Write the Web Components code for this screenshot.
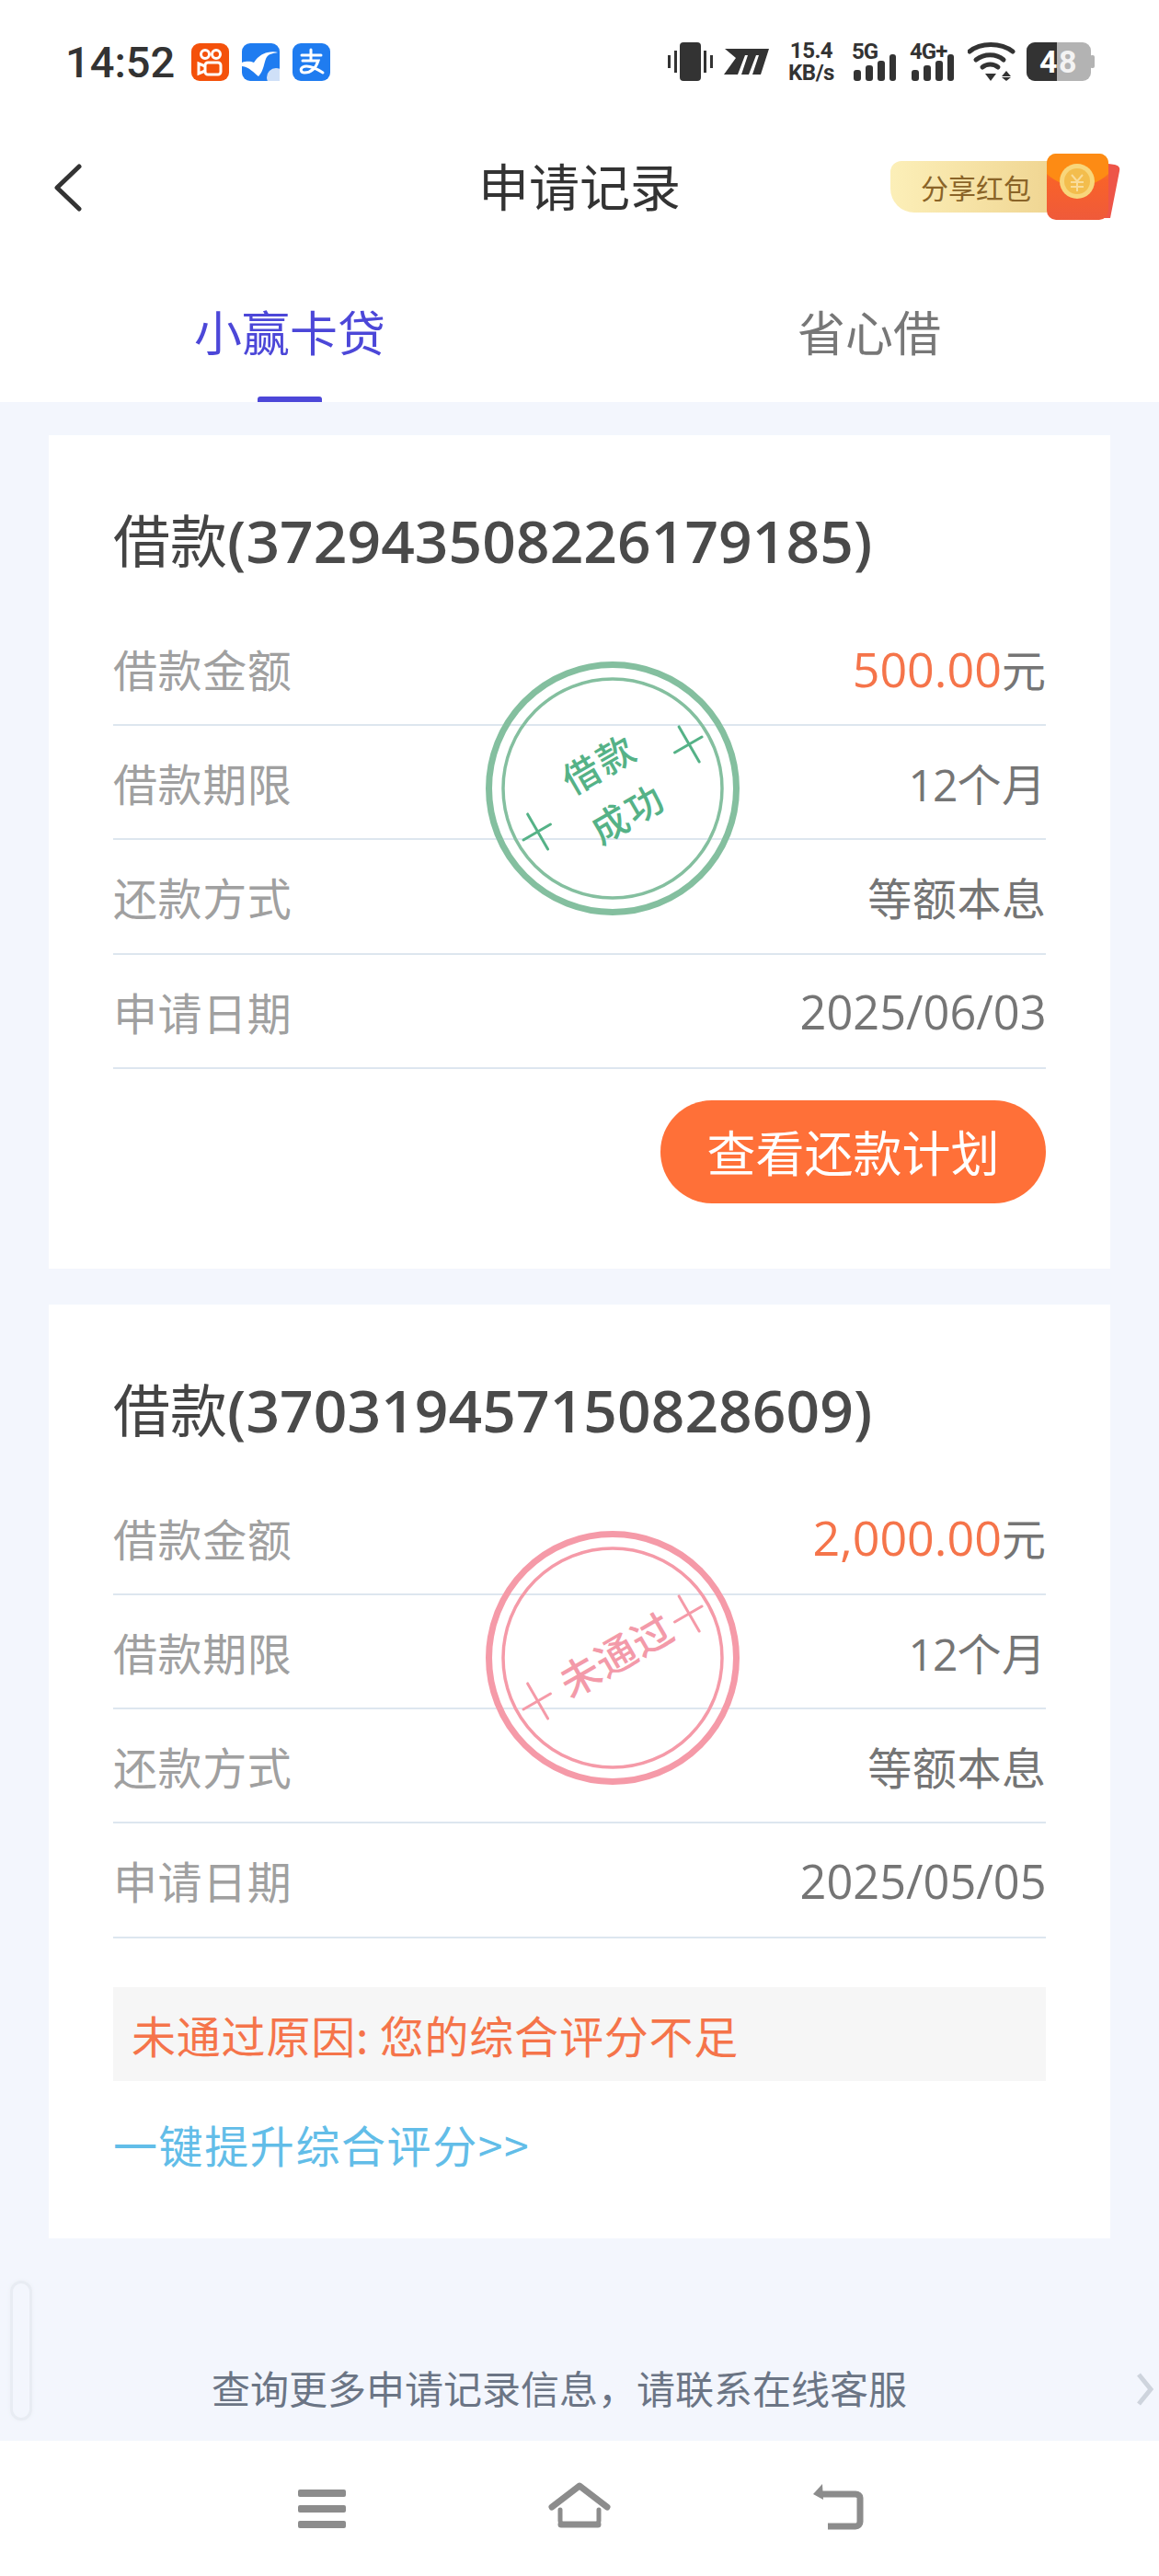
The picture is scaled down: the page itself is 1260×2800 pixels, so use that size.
<!DOCTYPE html>
<html lang="zh">
<head>
<meta charset="utf-8">
<title>申请记录</title>
<style>
  html, body { margin: 0; padding: 0; }
  body {
    width: 1260px;
    height: 2800px;
    overflow: hidden;
    background: #f3f6fd;
    font-family: "Noto Sans CJK SC", "Noto Sans", sans-serif;
    display: flex;
    flex-direction: column;
  }
</style>
</head>
<body>
  <status-bar></status-bar>
  <app-header></app-header>
  <tab-bar></tab-bar>
  <record-list>
    <loan-card loan-id="372943508226179185" amount="500.00" date="2025/06/03" stamp="ok">
      <pill-button>查看还款计划</pill-button>
    </loan-card>
    <loan-card loan-id="370319457150828609" amount="2,000.00" date="2025/05/05" stamp="fail">
      <fail-reason>未通过原因: 您的综合评分不足</fail-reason>
    </loan-card>
  </record-list>
  <help-foot>查询更多申请记录信息，请联系在线客服</help-foot>
  <nav-bar></nav-bar>

<script>
class StatusBar extends HTMLElement {
  constructor() {
    super();
    this.attachShadow({ mode: "open" });
  }
  connectedCallback() {
    this.shadowRoot.innerHTML = `
    <style>
      :host { display: flex; align-items: center; height: 130px; padding: 4px 70px 0 71px; box-sizing: border-box; background: #fff; color: #333; font-family: "Roboto", "Noto Sans", sans-serif; }
      .time { font-size: 47px; font-weight: 500; width: 137px; line-height: 1; }
      .apps { display: flex; gap: 14px; }
      .apps svg { display: block; }
      .right { margin-left: auto; display: flex; align-items: center; height: 44px; }
      svg { display: block; flex: none; }
      .speed { width: 50px; margin: 0 19px 0 21px; font-size: 24px; font-weight: 700; line-height: 24px; text-align: center; white-space: nowrap; letter-spacing: -.5px; }
      .net { position: relative; width: 50px; height: 42px; margin-right: 13px; }
      .net b { position: absolute; left: 0; top: 0; font-size: 24px; line-height: 20px; font-weight: 700; white-space: nowrap; letter-spacing: -1px; }
      .net svg { position: absolute; left: 2px; top: 13px; }
      .batt { position: relative; width: 74px; height: 42px; margin-left: 12px; }
      .batt span { position: absolute; top: 0; font-size: 34px; line-height: 42px; font-weight: 700; color: #fff; }
    </style>
    <span class="time">14:52</span>
    <div class="apps">
      <svg width="41" height="41" viewBox="0 0 41 41"><rect width="41" height="41" rx="9" fill="#f4510b"/><g fill="none" stroke="#fff" stroke-width="3"><circle cx="15" cy="12" r="4.5"/><circle cx="27" cy="12" r="4.5"/><rect x="15" y="21" width="17" height="13" rx="3"/><path d="M15 25l-7-3v11l7-3"/></g></svg>
      <svg width="41" height="41" viewBox="0 0 41 41"><rect width="41" height="41" rx="9" fill="#1f7cf0"/><path d="M0 21c6-2 10-1 13 0 3-5 9-10 15-11 4-1 8-1 11 0-6 1-10 2-12 5-3 5-3 15-9 21C13 32 8 26 0 25z" fill="#fff"/><circle cx="37" cy="37" r="10" fill="#cfe0f8"/></svg>
      <svg width="41" height="41" viewBox="0 0 41 41"><rect width="41" height="41" rx="9" fill="#1f7cf0"/><g fill="none" stroke="#fff" stroke-width="3" stroke-linecap="round"><path d="M10 13h21M20 7v11M11 19h17c-3 9-9 13-15 13-4 0-5-4-2-6 6-3 14 1 22 6"/></g></svg>
    </div>
    <div class="right">
      <svg width="49" height="42" viewBox="0 0 49 42" fill="#333"><rect x="13" width="23" height="42" rx="4"/><rect y="14" width="3" height="14"/><rect x="7" y="9" width="3" height="24"/><rect x="39" y="9" width="3" height="24"/><rect x="46" y="14" width="3" height="14"/></svg>
      <svg width="49" height="28" viewBox="0 0 49 28" fill="#333" style="margin-left:12px"><path d="M1 0h48l-9 28h-9l7-21h-3l-8 21h-8l7-21h-3l-8 21H0l13-18z"/></svg>
      <div class="speed">15.4<br>KB/s</div>
      <div class="net"><b>5G</b><svg width="46" height="29" viewBox="0 0 46 29" fill="#333"><rect y="17" width="8" height="12" rx="3"/><rect x="13" y="12" width="8" height="17" rx="3"/><rect x="26" y="7" width="8" height="22" rx="3"/><rect x="39" y="0" width="7" height="29" rx="3"/></svg></div>
      <div class="net"><b>4G+</b><svg width="46" height="29" viewBox="0 0 46 29" fill="#333"><rect y="17" width="8" height="12" rx="3"/><rect x="13" y="12" width="8" height="17" rx="3"/><rect x="26" y="7" width="8" height="22" rx="3"/><rect x="39" y="0" width="7" height="29" rx="3"/></svg></div>
      <svg width="52" height="42" viewBox="0 0 52 42"><g fill="none" stroke="#333" stroke-width="5" stroke-linecap="round"><path d="M2 10C14 0 36 0 49 10"/><path d="M9 19c9-7 22-7 30 0"/><path d="M16 27c5-4 12-4 17 0"/></g><path d="M19 34h12l-6 8zM42 31l5 6H37zM37 38h10l-5 4z" fill="#333"/></svg>
      <div class="batt">
        <svg width="74" height="42" viewBox="0 0 74 42"><rect x="69" y="14" width="5" height="14" rx="2" fill="#b3b3b3"/><rect width="70" height="42" rx="9" fill="#b3b3b3"/><path d="M9 0h24v42H9a9 9 0 0 1-9-9V9a9 9 0 0 1 9-9z" fill="#333"/></svg>
        <span style="left:14px">4</span><span style="left:35px;opacity:.85">8</span>
      </div>
    </div>`;
  }
}

class AppHeader extends HTMLElement {
  constructor() {
    super();
    this.attachShadow({ mode: "open" });
  }
  connectedCallback() {
    this.shadowRoot.innerHTML = `
    <style>
      :host { display: flex; align-items: center; position: relative; height: 148px; background: #fff; padding: 0 42px 0 57px; box-sizing: border-box; }
      h1 { position: absolute; left: 0; right: 0; top: 35px; margin: 0; text-align: center; font-size: 55px; line-height: 70px; font-weight: 400; color: #333; }
      svg { display: block; }
      .share { margin-left: auto; display: flex; align-items: center; position: relative; }
      .pill { width: 172px; height: 56px; box-sizing: border-box; padding: 0 0 0 33px; border-radius: 12px 0 0 26px; background: linear-gradient(90deg, #fcefb8, #f0d693); color: #8a6428; font-size: 30px; line-height: 56px; white-space: nowrap; }
      .bag { margin-left: -2px; }
    </style>
    <svg width="33" height="52" viewBox="0 0 33 52"><path d="M29 3L5 26l24 23" fill="none" stroke="#333" stroke-width="5" stroke-linecap="round" stroke-linejoin="round"/></svg>
    <h1>申请记录</h1>
    <div class="share" style="margin-top:-2px">
      <div class="pill">分享红包</div>
      <svg class="bag" width="80" height="72" viewBox="0 0 80 72">
        <defs><linearGradient id="env" x1="0" y1="0" x2="0" y2="1"><stop offset="0" stop-color="#ffa30f"/><stop offset=".4" stop-color="#f8622a"/><stop offset="1" stop-color="#ef5a3a"/></linearGradient></defs>
        <path d="M60 10l14 2c4 1 6 3 5 7L69 70H50z" fill="#ee5548"/>
        <rect width="67" height="72" rx="10" fill="url(#env)"/>
        <path d="M0 22c20 18 47 18 67 0V10A10 10 0 0 0 57 0H10A10 10 0 0 0 0 10z" fill="#fd8b14"/>
        <circle cx="33" cy="30" r="19" fill="#f8d67b"/>
        <circle cx="33" cy="30" r="14" fill="#f3bd4d"/>
        <path d="M27 23l6 7 6-7M26 31h14M26 36h14M33 30v11" fill="none" stroke="#f9dc9b" stroke-width="2"/>
      </svg>
    </div>`;
  }
}

class TabBar extends HTMLElement {
  constructor() {
    super();
    this.attachShadow({ mode: "open" });
  }
  connectedCallback() {
    this.shadowRoot.innerHTML = `
    <style>
      :host { display: grid; grid-template-columns: 1fr 1fr; height: 159px; background: #fff; }
      div { position: relative; text-align: center; font-size: 52px; line-height: 66px; padding-top: 49px; color: #777; }
      .on { color: #4c47d8; }
      .on::after { content: ""; position: absolute; left: 280px; bottom: 0; width: 70px; height: 6px; background: #4c47d8; border-radius: 3px 3px 0 0; }
    </style>
    <div class="on">小赢卡贷</div>
    <div>省心借</div>`;
  }
}

class RecordList extends HTMLElement {
  constructor() {
    super();
    this.attachShadow({ mode: "open" });
  }
  connectedCallback() {
    this.shadowRoot.innerHTML = `
    <style>
      :host { display: flex; flex-direction: column; gap: 39px; padding: 36px 53px 0; flex: 1; min-height: 0; }
    </style>
    <slot></slot>`;
  }
}

class LoanStamp extends HTMLElement {
  constructor() {
    super();
    this.attachShadow({ mode: "open" });
  }
  connectedCallback() {
    const ok = this.getAttribute("kind") === "ok";
    const ring = ok ? "#84bf9f" : "#f59aa8";
    const ink = ok ? "#55b287" : "#f39aa9";
    const words = ok
      ? `<text x="1" y="-15" font-size="40" letter-spacing="3" text-anchor="middle">借款</text><text x="1" y="47" font-size="40" letter-spacing="3" text-anchor="middle">成功</text>`
      : `<text x="5" y="16" font-size="44" letter-spacing="1" text-anchor="middle">未通过</text>`;
    this.shadowRoot.innerHTML = `
    <style>
      :host { display: block; position: absolute; left: 473px; top: 244px; width: 280px; height: 280px; }
      svg { display: block; }
      text { font-family: "Noto Sans CJK SC", sans-serif; font-weight: 500; }
    </style>
    <svg width="280" height="280" viewBox="-140 -140 280 280">
      <circle r="134.5" fill="none" stroke="${ring}" stroke-width="7"/>
      <circle r="119" fill="none" stroke="${ring}" stroke-width="3.5"/>
      <g transform="rotate(-30)" fill="${ink}">${words}
        <g stroke="${ok ? ink : ring}" stroke-width="3" stroke-linecap="round" fill="none">
          <path d="M78 0h34M96 -22v44"/>
          <path d="M-112 0h34M-94 -22v44"/>
        </g>
      </g>
    </svg>`;
  }
}

class LoanCard extends HTMLElement {
  constructor() {
    super();
    this.attachShadow({ mode: "open" });
  }
  connectedCallback() {
    const id = this.getAttribute("loan-id");
    const rows = [
      ["借款金额", `<em class="num">${this.getAttribute("amount")}</em>元`],
      ["借款期限", `<i class="num short">12</i>个月`],
      ["还款方式", "等额本息"],
      ["申请日期", `<i class="num">${this.getAttribute("date")}</i>`],
    ];
    this.shadowRoot.innerHTML = `
    <style>
      :host { display: block; position: relative; background: #fff; padding: 73px 70px 71px; }
      h2 { margin: 0 0 38px; font-size: 62px; line-height: 78px; font-weight: 400; color: #444; white-space: nowrap; }
      h2 span { font-family: "Open Sans", sans-serif; font-size: 64px; font-weight: 600; color: #4a4a4a; letter-spacing: .1px; }
      .row { display: flex; justify-content: space-between; align-items: center; height: 124.2px; border-bottom: 2px solid #dde6ef; box-sizing: border-box; font-size: 48px; color: #757575; }
      .row label { color: #a0a0a0; letter-spacing: .6px; }
      .row span { letter-spacing: .6px; margin-right: -.6px; white-space: nowrap; }
      .num { font-family: "Open Sans", sans-serif; font-size: 50.5px; font-style: normal; letter-spacing: 0; }
      .short { font-size: 48px; letter-spacing: -1px; }
      em.num { color: #f5744a; font-size: 52px; }
    </style>
    <h2>借款<span>(${id})</span></h2>
    ${rows.map(r => `<div class="row"><label>${r[0]}</label><span>${r[1]}</span></div>`).join("")}
    <slot></slot>
    <loan-stamp kind="${this.getAttribute("stamp")}"></loan-stamp>`;
  }
}

class PillButton extends HTMLElement {
  constructor() {
    super();
    this.attachShadow({ mode: "open" });
  }
  connectedCallback() {
    this.shadowRoot.innerHTML = `
    <style>
      :host { display: flex; justify-content: flex-end; margin-top: 34px; }
      button { width: 419px; height: 112px; border: 0; border-radius: 56px; background: #ff7038; color: #fff; font: 400 53px/1 "Noto Sans CJK SC", sans-serif; padding: 0; }
    </style>
    <button><slot></slot></button>`;
  }
}

class FailReason extends HTMLElement {
  constructor() {
    super();
    this.attachShadow({ mode: "open" });
  }
  connectedCallback() {
    this.shadowRoot.innerHTML = `
    <style>
      :host { display: block; margin-top: 53px; }
      .box { height: 102px; background: #f6f6f6; padding-left: 20px; color: #f5744a; font-size: 48px; line-height: 102px; white-space: nowrap; letter-spacing: .8px; }
      a { display: block; margin: 38px 0 2px; color: #62bde8; font-size: 48px; line-height: 60px; white-space: nowrap; letter-spacing: 1.6px; }
    </style>
    <div class="box"><slot></slot></div>
    <a>一键提升综合评分&gt;&gt;</a>`;
  }
}

class HelpFoot extends HTMLElement {
  constructor() {
    super();
    this.attachShadow({ mode: "open" });
  }
  connectedCallback() {
    this.shadowRoot.innerHTML = `
    <style>
      :host { display: block; position: relative; height: 100px; text-align: center; color: #6b7585; font-size: 42px; line-height: 60px; padding: 12px 44px 0 0; box-sizing: border-box; }
      .handle { position: absolute; left: 11px; bottom: 22px; width: 24px; height: 152px; box-sizing: border-box; border: 3px solid #e8ecf3; border-radius: 12px; box-shadow: 0 0 4px #eceff5; }
      svg { position: absolute; right: 5px; top: 26px; }
    </style>
    <div class="handle"></div>
    <slot></slot>
    <svg width="20" height="36" viewBox="0 0 20 36"><path d="M3 2l13 16L3 34" fill="none" stroke="#ced4dd" stroke-width="5"/></svg>`;
  }
}

class NavBar extends HTMLElement {
  constructor() {
    super();
    this.attachShadow({ mode: "open" });
  }
  connectedCallback() {
    this.shadowRoot.innerHTML = `
    <style>
      :host { display: flex; align-items: flex-start; height: 147px; background: #fff; padding: 45px 0 0 324px; box-sizing: border-box; }
      svg { display: block; flex: none; }
    </style>
    <svg width="52" height="50" viewBox="0 0 52 50" style="margin-top:8px" fill="#8c8c8c"><rect width="52" height="8" rx="2"/><rect y="17" width="52" height="8" rx="2"/><rect y="34" width="52" height="8" rx="2"/></svg>
    <svg width="68" height="50" viewBox="0 0 68 50" style="margin-left:220px" fill="none" stroke="#8c8c8c" stroke-width="7" stroke-linejoin="round" stroke-linecap="round"><path d="M4 27L34 4l30 23"/><path d="M13 30v12c0 3 2 4 4 4h34c2 0 4-1 4-4V30" stroke-width="5"/><path d="M14 46h40" stroke-width="7"/></svg>
    <svg width="58" height="52" viewBox="0 0 58 52" style="margin-left:218px" fill="none" stroke="#8c8c8c" stroke-width="7"><path d="M10 13h38c3 0 5 2 5 4v26c0 3-2 5-5 5H18"/><path d="M12 2L2 13l11 6z" fill="#8c8c8c" stroke="none"/></svg>`;
  }
}

customElements.define("status-bar", StatusBar);
customElements.define("app-header", AppHeader);
customElements.define("tab-bar", TabBar);
customElements.define("record-list", RecordList);
customElements.define("loan-stamp", LoanStamp);
customElements.define("loan-card", LoanCard);
customElements.define("pill-button", PillButton);
customElements.define("fail-reason", FailReason);
customElements.define("help-foot", HelpFoot);
customElements.define("nav-bar", NavBar);
</script>
</body>
</html>
